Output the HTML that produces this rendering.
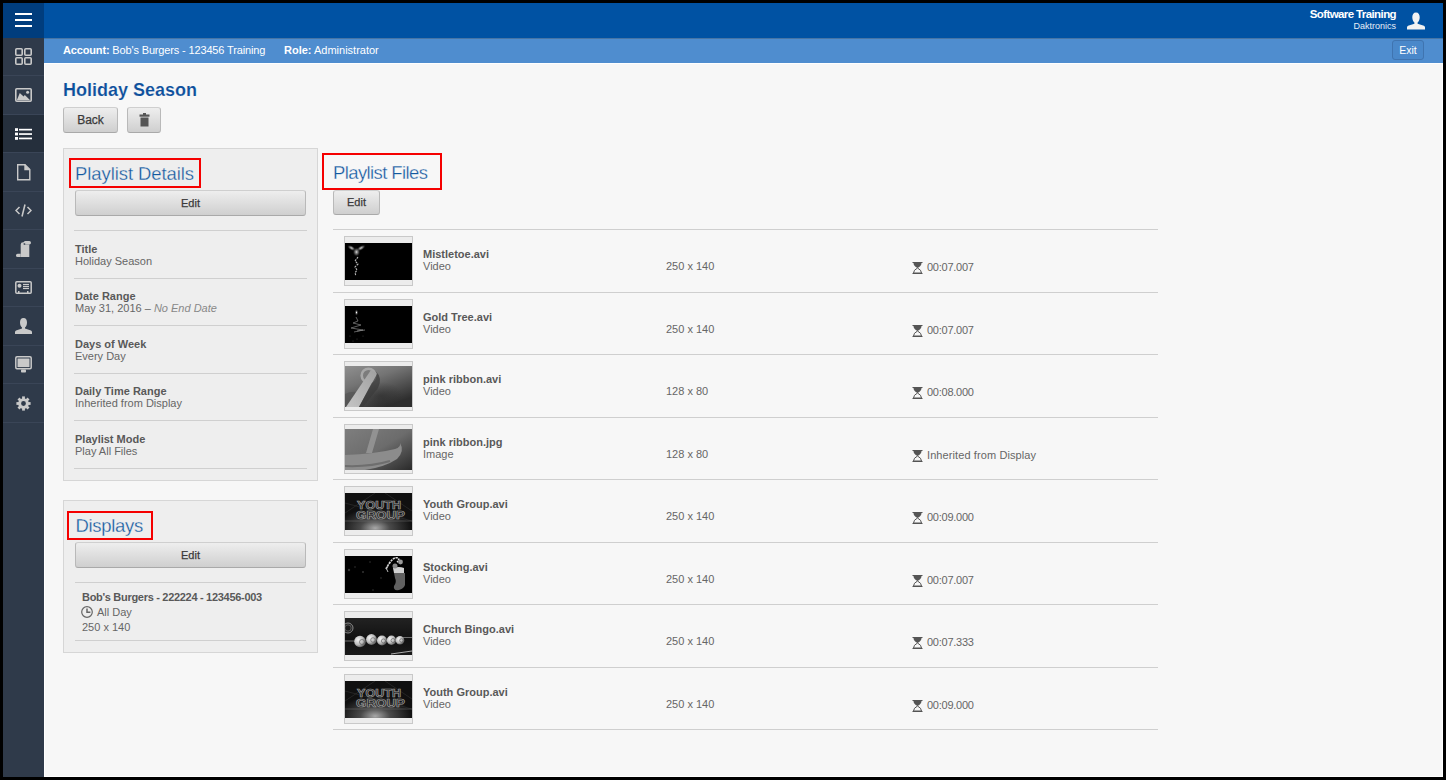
<!DOCTYPE html>
<html><head><meta charset="utf-8">
<style>
*{box-sizing:border-box;margin:0;padding:0}
html,body{width:1446px;height:780px;overflow:hidden;background:#000;font-family:"Liberation Sans",sans-serif}
body{position:relative}
.a{position:absolute;white-space:nowrap}
#frame{position:absolute;left:3px;top:3px;width:1440px;height:774px;background:#f7f7f7}
#header{left:44px;top:3px;width:1399px;height:35px;background:#0052a3}
#burger{left:3px;top:3px;width:41px;height:35px;background:#003d7d}
#burger i{position:absolute;left:12px;width:17px;height:2px;background:#fff}
#sub{left:44px;top:38px;width:1399px;height:25px;background:#4f8dcf;color:#fff;font-size:11px}
#sidebar{left:3px;top:38px;width:41px;height:739px;background:#2f3a4a}
.sep{position:absolute;left:3px;width:41px;height:1px;background:#3a4557}

.btn{border:1px solid #b9b9b9;border-top-color:#cfcfcf;border-bottom-color:#a9a9a9;border-radius:3px;background:linear-gradient(#eeeeee,#cfcfcf);color:#3a3a3a;text-align:center;-webkit-text-stroke:0.25px #3a3a3a}

.panel{border:1px solid #d6d6d6;background:#eeeeee}
.redbox{border:2px solid #f50000}
.h2{color:#12589f;font-size:18.5px;font-weight:normal;-webkit-text-stroke:0.3px #f7f7f7}
.hl{height:1px;background:#cfcfcf}
.lbl{color:#595959;font-size:11px;font-weight:bold}
.val{color:#666;font-size:11px}

.thumb{width:69px;height:50px;border:1px solid #c9c9c9;background:#ececec;overflow:hidden}
.thimg{position:absolute;left:0;width:67px;background:#000}
.thimg svg{display:block}
</style></head><body>
<div id="frame"></div>
<div class="a" id="sidebar"></div>
<div class="a" id="header"></div>
<div class="a" id="burger"><i style="top:10px"></i><i style="top:16px"></i><i style="top:22px"></i></div>
<div class="a" id="sub"></div>

<!-- sidebar nav -->
<div class="a" style="left:3px;top:114px;width:41px;height:38px;background:#252f3c"></div>
<div class="sep" style="top:75px"></div>
<div class="sep" style="top:114px"></div>
<div class="sep" style="top:152px"></div>
<div class="sep" style="top:191px"></div>
<div class="sep" style="top:229px"></div>
<div class="sep" style="top:268px"></div>
<div class="sep" style="top:306px"></div>
<div class="sep" style="top:345px"></div>
<div class="sep" style="top:383px"></div>
<div class="sep" style="top:422px"></div>
<svg class="a" style="left:15px;top:48px" width="17" height="17" viewBox="0 0 17 17" fill="none" stroke="#c9c9c9" stroke-width="1.6"><rect x="0.8" y="0.8" width="6.4" height="6.4" rx="1"/><rect x="9.8" y="0.8" width="6.4" height="6.4" rx="1"/><rect x="0.8" y="9.8" width="6.4" height="6.4" rx="1"/><rect x="9.8" y="9.8" width="6.4" height="6.4" rx="1"/></svg>
<svg class="a" style="left:15px;top:88px" width="17" height="14" viewBox="0 0 17 14"><rect x="0.8" y="0.8" width="15.4" height="12.4" rx="1" fill="none" stroke="#c9c9c9" stroke-width="1.6"/><path d="M1.8 12.3 L4.8 5 L8.6 8.6 L9.8 7 L15.2 12.3 Z" fill="#c9c9c9"/><circle cx="12.6" cy="4.3" r="1.5" fill="#c9c9c9"/></svg>
<svg class="a" style="left:15px;top:128px" width="17" height="12" viewBox="0 0 17 12" fill="#fff"><rect x="0" y="0.2" width="3" height="2.8"/><rect x="0" y="4.6" width="3" height="2.8"/><rect x="0" y="9" width="3" height="2.8"/><rect x="4" y="0.8" width="13" height="1.7"/><rect x="4" y="5.2" width="13" height="1.7"/><rect x="4" y="9.6" width="13" height="1.7"/></svg>
<svg class="a" style="left:17px;top:164px" width="14" height="17" viewBox="0 0 14 17" fill="none" stroke="#c9c9c9" stroke-width="1.4"><path d="M0.7 0.7 H8 L12.8 5.5 V15.8 H0.7 Z"/><path d="M8 0.7 V5.5 H12.8" fill="#c9c9c9"/></svg>
<svg class="a" style="left:15px;top:204px" width="17" height="13" viewBox="0 0 17 13" fill="none" stroke="#c9c9c9" stroke-width="1.5"><path d="M4.5 3 L1 6.5 L4.5 10"/><path d="M12.5 3 L16 6.5 L12.5 10"/><path d="M10 0.5 L7 12.5"/></svg>
<svg class="a" style="left:16px;top:241px" width="15" height="16" viewBox="0 0 15 16" fill="#c9c9c9"><path d="M4.7 16 V3.6 Q4.7 1.2 7.2 1.2 H8 V3.4 H13.3 V16 Z"/><rect x="7.6" y="0" width="7.4" height="3.4" rx="1.7"/><rect x="7.6" y="2.3" width="1.6" height="1.3" fill="#2f3a4a"/><path d="M1.6 16 A1.6 1.6 0 0 1 1.6 12.8 H4.7 V16 Z"/></svg>
<svg class="a" style="left:15px;top:281px" width="17" height="13" viewBox="0 0 17 13"><rect x="0.8" y="0.8" width="15.4" height="11.4" rx="1" fill="none" stroke="#c9c9c9" stroke-width="1.5"/><circle cx="4.5" cy="4.7" r="2" fill="#c9c9c9"/><rect x="8" y="2.9" width="6" height="1.2" fill="#c9c9c9"/><rect x="8" y="4.9" width="6" height="1.2" fill="#c9c9c9"/><rect x="8" y="6.9" width="6" height="1.2" fill="#c9c9c9"/><rect x="3" y="10" width="1.5" height="2" fill="#c9c9c9"/><rect x="12" y="10" width="1.5" height="2" fill="#c9c9c9"/></svg>
<svg class="a" style="left:15px;top:318px" width="17" height="16" viewBox="0 0 17 16" fill="#c9c9c9"><path d="M8.5 0 C11 0 12 2 12 4.5 C12 7 11 8.8 10 9.5 V10.5 L16 12.5 Q17 13 17 14 V16 H0 V14 Q0 13 1 12.5 L7 10.5 V9.5 C6 8.8 5 7 5 4.5 C5 2 6 0 8.5 0 Z"/></svg>
<svg class="a" style="left:15px;top:356px" width="17" height="17" viewBox="0 0 17 17"><rect x="0.8" y="0.8" width="15.4" height="12" rx="1.2" fill="none" stroke="#c9c9c9" stroke-width="1.5"/><rect x="2.5" y="2.5" width="12" height="8.6" fill="#c9c9c9"/><rect x="6" y="13.5" width="5" height="3" rx="0.8" fill="#c9c9c9"/></svg>
<svg class="a" style="left:16px;top:396px" width="15" height="15" viewBox="-7.5 -7.5 15 15" fill="#c9c9c9"><path fill-rule="evenodd" d="M5.3 0 A5.3 5.3 0 1 1 -5.3 0 A5.3 5.3 0 1 1 5.3 0 Z M2.4 0 A2.4 2.4 0 1 0 -2.4 0 A2.4 2.4 0 1 0 2.4 0 Z"/><rect x="-1.4" y="-7.1" width="2.8" height="2.8" transform="rotate(0)"/><rect x="-1.4" y="-7.1" width="2.8" height="2.8" transform="rotate(45)"/><rect x="-1.4" y="-7.1" width="2.8" height="2.8" transform="rotate(90)"/><rect x="-1.4" y="-7.1" width="2.8" height="2.8" transform="rotate(135)"/><rect x="-1.4" y="-7.1" width="2.8" height="2.8" transform="rotate(180)"/><rect x="-1.4" y="-7.1" width="2.8" height="2.8" transform="rotate(225)"/><rect x="-1.4" y="-7.1" width="2.8" height="2.8" transform="rotate(270)"/><rect x="-1.4" y="-7.1" width="2.8" height="2.8" transform="rotate(315)"/></svg>

<!-- header right -->
<div class="a" style="right:50px;top:8px;color:#fff;font-size:11.5px;font-weight:bold;letter-spacing:-0.6px;text-align:right">Software Training</div>
<div class="a" style="right:50px;top:21px;color:#e6eef7;font-size:9px;text-align:right">Daktronics</div>
<svg class="a" style="left:1407px;top:12px" width="18" height="18" viewBox="0 0 17 16" fill="#f2f2f2"><path d="M8.5 0 C11 0 12 2 12 4.5 C12 7 11 8.8 10 9.5 V10.5 L16 12.5 Q17 13 17 14 V16 H0 V14 Q0 13 1 12.5 L7 10.5 V9.5 C6 8.8 5 7 5 4.5 C5 2 6 0 8.5 0 Z"/></svg>
<!-- subheader -->
<div class="a" style="left:63px;top:44px;color:#fff;font-size:11px;letter-spacing:-0.15px"><b>Account:</b> Bob's Burgers - 123456 Training</div>
<div class="a" style="left:284px;top:44px;color:#fff;font-size:11px"><b>Role:</b> Administrator</div>
<div class="a" style="left:1392px;top:40px;width:32px;height:20px;border:1px solid #3f74b0;border-radius:3px;background:#4a88ca;color:#fff;font-size:10.5px;text-align:center;line-height:18px">Exit</div>
<!-- title -->
<div class="a" style="left:63px;top:80px;color:#0d4f9c;font-size:18px;font-weight:bold;-webkit-text-stroke:0.15px #f7f7f7">Holiday Season</div>
<div class="a btn" style="left:63px;top:107px;width:55px;height:26px;font-size:12px;line-height:24px">Back</div>
<div class="a btn" style="left:127px;top:107px;width:34px;height:26px"><svg style="position:absolute;left:11px;top:5px" width="11" height="14" viewBox="0 0 11 14" fill="#555"><rect x="0.5" y="1.5" width="10" height="2.2"/><rect x="4" y="0" width="3" height="2"/><rect x="1.5" y="4.5" width="8" height="9"/></svg></div>

<!-- left panels -->
<div class="a panel" style="left:63px;top:148px;width:255px;height:333px"></div>
<div class="a redbox" style="left:69px;top:158px;width:132px;height:30px"></div>
<div class="a h2" style="left:75px;top:163px;letter-spacing:-0.08px;-webkit-text-stroke-color:#eee">Playlist Details</div>
<div class="a btn" style="left:75px;top:190px;width:231px;height:26px;font-size:11px;line-height:24px">Edit</div>
<div class="a hl" style="left:74px;top:230px;width:233px"></div>
<div class="a lbl" style="left:75px;top:243px">Title</div>
<div class="a val" style="left:75px;top:255px">Holiday Season</div>
<div class="a hl" style="left:74px;top:278px;width:233px"></div>
<div class="a lbl" style="left:75px;top:290px">Date Range</div>
<div class="a val" style="left:75px;top:302px">May 31, 2016 &ndash; <i style="color:#888">No End Date</i></div>
<div class="a hl" style="left:74px;top:325px;width:233px"></div>
<div class="a lbl" style="left:75px;top:338px">Days of Week</div>
<div class="a val" style="left:75px;top:350px">Every Day</div>
<div class="a hl" style="left:74px;top:373px;width:233px"></div>
<div class="a lbl" style="left:75px;top:385px">Daily Time Range</div>
<div class="a val" style="left:75px;top:397px">Inherited from Display</div>
<div class="a hl" style="left:74px;top:420px;width:233px"></div>
<div class="a lbl" style="left:75px;top:433px">Playlist Mode</div>
<div class="a val" style="left:75px;top:445px">Play All Files</div>
<div class="a hl" style="left:74px;top:468px;width:233px"></div>

<div class="a panel" style="left:63px;top:500px;width:255px;height:153px"></div>
<div class="a redbox" style="left:67px;top:511px;width:86px;height:29px"></div>
<div class="a h2" style="left:75.5px;top:515px;letter-spacing:-0.3px;-webkit-text-stroke-color:#eee">Displays</div>
<div class="a btn" style="left:75px;top:542px;width:231px;height:26px;font-size:11px;line-height:24px">Edit</div>
<div class="a hl" style="left:75px;top:582px;width:231px"></div>
<div class="a lbl" style="left:82px;top:591px;letter-spacing:-0.3px">Bob's Burgers - 222224 - 123456-003</div>
<svg class="a" style="left:81px;top:606px" width="12" height="12" viewBox="0 0 12 12" fill="none" stroke="#666" stroke-width="1.2"><circle cx="6" cy="6" r="5.3"/><path d="M6 2.4 V6.2 H9.4" stroke-width="1.5"/></svg>
<div class="a val" style="left:97px;top:606px">All Day</div>
<div class="a val" style="left:82px;top:621px">250 x 140</div>
<div class="a hl" style="left:75px;top:640px;width:231px"></div>
<!-- playlist files -->
<div class="a redbox" style="left:322px;top:153px;width:120px;height:37px"></div>
<div class="a h2" style="left:333px;top:162px;letter-spacing:-0.6px">Playlist Files</div>
<div class="a btn" style="left:333px;top:190px;width:47px;height:25px;font-size:11px;line-height:23px">Edit</div>

<!-- file rows -->
<div class="a hl" style="left:333px;top:229px;width:825px"></div>
<div class="a thumb" style="left:344px;top:236px"><div class="thimg" style="top:6px;height:37px"><svg width="67" height="37" viewBox="0 0 67 37"><defs><radialGradient id="gm"><stop offset="0" stop-color="#d8d8d8"/><stop offset="0.5" stop-color="#707070" stop-opacity="0.7"/><stop offset="1" stop-color="#000" stop-opacity="0"/></radialGradient></defs><rect width="67" height="37" fill="#000"/><ellipse cx="6.5" cy="5" rx="5" ry="2.5" transform="rotate(30 6.5 5)" fill="url(#gm)"/><ellipse cx="16" cy="5" rx="5.5" ry="2.5" transform="rotate(-30 16 5)" fill="url(#gm)"/><ellipse cx="11.5" cy="9" rx="4" ry="5" fill="url(#gm)"/><path d="M13 14 L10 18 L13 21 L10 24 L12 27 L10 30 L11 33" stroke="#bbb" stroke-width="1.1" fill="none" stroke-dasharray="2 1"/></svg></div></div>
<div class="a lbl" style="left:423px;top:248px">Mistletoe.avi</div>
<div class="a val" style="left:423px;top:260px">Video</div>
<div class="a val" style="left:666px;top:260px">250 x 140</div>
<svg class="a" style="left:912px;top:262px" width="11" height="12" viewBox="0 0 11 12"><path d="M0.5 0.5 H10.5 M0.5 11.5 H10.5" stroke="#555" stroke-width="1.2"/><path d="M1.5 1 H9.5 Q9.5 4 5.5 6 Q1.5 4 1.5 1 Z" fill="#555"/><path d="M1.5 11 Q1.5 8 5.5 6 Q9.5 8 9.5 11 Z" fill="none" stroke="#555" stroke-width="1"/></svg>
<div class="a val" style="left:927px;top:261px;letter-spacing:-0.25px;">00:07.007</div>
<div class="a hl" style="left:333px;top:292px;width:825px"></div>
<div class="a thumb" style="left:344px;top:299px"><div class="thimg" style="top:6px;height:37px"><svg width="67" height="37" viewBox="0 0 67 37"><defs><radialGradient id="gt"><stop offset="0" stop-color="#fff"/><stop offset="1" stop-color="#000" stop-opacity="0"/></radialGradient></defs><rect width="67" height="37" fill="#000"/><ellipse cx="11.5" cy="6.5" rx="2" ry="3.5" fill="url(#gt)"/><path d="M11 11 L13 15 L8 17 L16 19 L6 22 L18 24 L9 26" stroke="#777" stroke-width="0.8" fill="none"/><path d="M12 25 L20 24" stroke="#888" stroke-width="0.8"/><g fill="#444"><circle cx="5" cy="30" r="0.5"/><circle cx="12" cy="33" r="0.5"/><circle cx="18" cy="30" r="0.5"/><circle cx="8" cy="35" r="0.5"/></g></svg></div></div>
<div class="a lbl" style="left:423px;top:311px">Gold Tree.avi</div>
<div class="a val" style="left:423px;top:323px">Video</div>
<div class="a val" style="left:666px;top:323px">250 x 140</div>
<svg class="a" style="left:912px;top:325px" width="11" height="12" viewBox="0 0 11 12"><path d="M0.5 0.5 H10.5 M0.5 11.5 H10.5" stroke="#555" stroke-width="1.2"/><path d="M1.5 1 H9.5 Q9.5 4 5.5 6 Q1.5 4 1.5 1 Z" fill="#555"/><path d="M1.5 11 Q1.5 8 5.5 6 Q9.5 8 9.5 11 Z" fill="none" stroke="#555" stroke-width="1"/></svg>
<div class="a val" style="left:927px;top:324px;letter-spacing:-0.25px;">00:07.007</div>
<div class="a hl" style="left:333px;top:354px;width:825px"></div>
<div class="a thumb" style="left:344px;top:361px"><div class="thimg" style="top:4px;height:41px"><svg width="67" height="41" viewBox="0 0 67 41"><defs><linearGradient id="gr1" x1="0" y1="0" x2="0.6" y2="1"><stop offset="0" stop-color="#909090"/><stop offset="0.4" stop-color="#747474"/><stop offset="1" stop-color="#2e2e2e"/></linearGradient><linearGradient id="gb1" x1="0" y1="1" x2="1" y2="0"><stop offset="0" stop-color="#c4c4c4"/><stop offset="1" stop-color="#a0a0a0"/></linearGradient><radialGradient id="gs1" cx="0.5" cy="0.5" r="0.5"><stop offset="0" stop-color="#222" stop-opacity="0.45"/><stop offset="1" stop-color="#222" stop-opacity="0"/></radialGradient></defs><rect width="67" height="41" fill="url(#gr1)"/><path d="M0 28 Q8 24 16 27 L14 41 L0 41 Z" fill="#555" opacity="0.7"/><ellipse cx="36" cy="30" rx="22" ry="14" fill="url(#gs1)"/><circle cx="23.5" cy="9.5" r="6.8" fill="#7c7c7c" stroke="#a8a8a8" stroke-width="2.6"/><path d="M1 41 L26 4 L32 7 L14 41 Z" fill="url(#gb1)"/><path d="M30.5 5 Q38 12 33 22 L18 41 L14 41 L32 8 Z" fill="#3a3a3a" opacity="0.7"/></svg></div></div>
<div class="a lbl" style="left:423px;top:373px">pink ribbon.avi</div>
<div class="a val" style="left:423px;top:385px">Video</div>
<div class="a val" style="left:666px;top:385px">128 x 80</div>
<svg class="a" style="left:912px;top:387px" width="11" height="12" viewBox="0 0 11 12"><path d="M0.5 0.5 H10.5 M0.5 11.5 H10.5" stroke="#555" stroke-width="1.2"/><path d="M1.5 1 H9.5 Q9.5 4 5.5 6 Q1.5 4 1.5 1 Z" fill="#555"/><path d="M1.5 11 Q1.5 8 5.5 6 Q9.5 8 9.5 11 Z" fill="none" stroke="#555" stroke-width="1"/></svg>
<div class="a val" style="left:927px;top:386px;letter-spacing:-0.25px;">00:08.000</div>
<div class="a hl" style="left:333px;top:417px;width:825px"></div>
<div class="a thumb" style="left:344px;top:424px"><div class="thimg" style="top:4px;height:41px"><svg width="67" height="41" viewBox="0 0 67 41"><defs><linearGradient id="gr2" x1="0" y1="0" x2="1" y2="1"><stop offset="0" stop-color="#7e7e7e"/><stop offset="0.5" stop-color="#6c6c6c"/><stop offset="1" stop-color="#2a2a2a"/></linearGradient></defs><rect width="67" height="41" fill="url(#gr2)"/><path d="M28 0 L34 0 L27 24 L21 24 Z" fill="#9a9a9a" opacity="0.8"/><path d="M0 26 Q30 25 50 20 Q56 18 55 14 Q60 22 52 30 Q40 38 20 41 L0 41 Z" fill="#8c8c8c"/><path d="M0 37 Q25 38 45 32" stroke="#6e6e6e" stroke-width="2" fill="none"/></svg></div></div>
<div class="a lbl" style="left:423px;top:436px">pink ribbon.jpg</div>
<div class="a val" style="left:423px;top:448px">Image</div>
<div class="a val" style="left:666px;top:448px">128 x 80</div>
<svg class="a" style="left:912px;top:450px" width="11" height="12" viewBox="0 0 11 12"><path d="M0.5 0.5 H10.5 M0.5 11.5 H10.5" stroke="#555" stroke-width="1.2"/><path d="M1.5 1 H9.5 Q9.5 4 5.5 6 Q1.5 4 1.5 1 Z" fill="#555"/><path d="M1.5 11 Q1.5 8 5.5 6 Q9.5 8 9.5 11 Z" fill="none" stroke="#555" stroke-width="1"/></svg>
<div class="a val" style="left:927px;top:449px;letter-spacing:0.1px;">Inherited from Display</div>
<div class="a hl" style="left:333px;top:479px;width:825px"></div>
<div class="a thumb" style="left:344px;top:486px"><div class="thimg" style="top:6px;height:37px"><svg width="67" height="37" viewBox="0 0 67 37"><defs><radialGradient id="gy" cx="0.45" cy="0.95" r="0.55"><stop offset="0" stop-color="#a8a8a8"/><stop offset="0.4" stop-color="#4a4a4a"/><stop offset="1" stop-color="#101010"/></radialGradient></defs><rect width="67" height="37" fill="url(#gy)"/><path d="M0 10 L67 28 M0 20 L30 0 M40 0 L67 18" stroke="#3a3a3a" stroke-width="0.5"/><g font-family="Liberation Sans" font-weight="bold" fill="#202020" stroke="#a0a0a0" stroke-width="0.65"><text x="12" y="15.5" font-size="11" textLength="44" lengthAdjust="spacingAndGlyphs">YOUTH</text><text x="11" y="26" font-size="11.5" textLength="49" lengthAdjust="spacingAndGlyphs">GROUP</text></g><path d="M0 28 H67" stroke="#777" stroke-width="0.5"/></svg></div></div>
<div class="a lbl" style="left:423px;top:498px">Youth Group.avi</div>
<div class="a val" style="left:423px;top:510px">Video</div>
<div class="a val" style="left:666px;top:510px">250 x 140</div>
<svg class="a" style="left:912px;top:512px" width="11" height="12" viewBox="0 0 11 12"><path d="M0.5 0.5 H10.5 M0.5 11.5 H10.5" stroke="#555" stroke-width="1.2"/><path d="M1.5 1 H9.5 Q9.5 4 5.5 6 Q1.5 4 1.5 1 Z" fill="#555"/><path d="M1.5 11 Q1.5 8 5.5 6 Q9.5 8 9.5 11 Z" fill="none" stroke="#555" stroke-width="1"/></svg>
<div class="a val" style="left:927px;top:511px;letter-spacing:-0.25px;">00:09.000</div>
<div class="a hl" style="left:333px;top:542px;width:825px"></div>
<div class="a thumb" style="left:344px;top:549px"><div class="thimg" style="top:6px;height:37px"><svg width="67" height="37" viewBox="0 0 67 37"><rect width="67" height="37" fill="#000"/><g fill="#333"><circle cx="4" cy="14" r="1.2"/><circle cx="18" cy="16" r="1"/><circle cx="10" cy="11" r="0.8"/><circle cx="36" cy="22" r="0.8"/><circle cx="28" cy="34" r="0.8"/><circle cx="25" cy="6" r="0.8"/></g><path d="M49 17 L60 17 L60 26 Q61 32 54 34 Q48 35 49 30 Q52 26 50 22 Z" fill="#606060"/><path d="M48 12 Q54 10 59 12 L59 17 L49 17 Z" fill="#d0d0d0"/><path d="M41 13 Q44 7 47 4 Q50 1 53 2 Q55 4 52 6" stroke="#d8d8d8" stroke-width="1.7" fill="none" stroke-dasharray="2.2 0.8"/><circle cx="55.5" cy="6" r="2.4" fill="#999"/><circle cx="50" cy="10" r="2.5" fill="#888"/><path d="M43 9 Q40 13 43 16" stroke="#bbb" stroke-width="1" fill="none"/></svg></div></div>
<div class="a lbl" style="left:423px;top:561px">Stocking.avi</div>
<div class="a val" style="left:423px;top:573px">Video</div>
<div class="a val" style="left:666px;top:573px">250 x 140</div>
<svg class="a" style="left:912px;top:575px" width="11" height="12" viewBox="0 0 11 12"><path d="M0.5 0.5 H10.5 M0.5 11.5 H10.5" stroke="#555" stroke-width="1.2"/><path d="M1.5 1 H9.5 Q9.5 4 5.5 6 Q1.5 4 1.5 1 Z" fill="#555"/><path d="M1.5 11 Q1.5 8 5.5 6 Q9.5 8 9.5 11 Z" fill="none" stroke="#555" stroke-width="1"/></svg>
<div class="a val" style="left:927px;top:574px;letter-spacing:-0.25px;">00:07.007</div>
<div class="a hl" style="left:333px;top:604px;width:825px"></div>
<div class="a thumb" style="left:344px;top:611px"><div class="thimg" style="top:6px;height:37px"><svg width="67" height="37" viewBox="0 0 67 37"><defs><radialGradient id="gball" cx="0.35" cy="0.35" r="0.7"><stop offset="0" stop-color="#f4f4f4"/><stop offset="0.6" stop-color="#bbb"/><stop offset="1" stop-color="#555"/></radialGradient><linearGradient id="gbg" x1="0" y1="0" x2="0" y2="1"><stop offset="0" stop-color="#222"/><stop offset="0.6" stop-color="#111"/><stop offset="1" stop-color="#1a1a1a"/></linearGradient></defs><rect width="67" height="37" fill="url(#gbg)"/><circle cx="3" cy="10" r="5" fill="none" stroke="#999" stroke-width="0.9"/><circle cx="3" cy="10" r="3.2" fill="none" stroke="#777" stroke-width="0.7"/><path d="M0 23 H14 M58 19.5 H67" stroke="#999" stroke-width="0.7"/><path d="M46 36 L67 33" stroke="#aaa" stroke-width="1"/><circle cx="15" cy="23.5" r="5.8" fill="url(#gball)"/><circle cx="26.5" cy="21.5" r="5.4" fill="url(#gball)"/><circle cx="37" cy="22.5" r="5" fill="url(#gball)"/><circle cx="46.5" cy="22.3" r="4.7" fill="url(#gball)"/><circle cx="55" cy="22.3" r="4.3" fill="url(#gball)"/><g fill="none" stroke="#555" stroke-width="0.6"><circle cx="17" cy="24" r="2.5"/><circle cx="28" cy="22" r="2.3"/><circle cx="38.5" cy="23" r="2.1"/><circle cx="48" cy="22.5" r="2"/><circle cx="56.5" cy="22.5" r="1.8"/></g></svg></div></div>
<div class="a lbl" style="left:423px;top:623px">Church Bingo.avi</div>
<div class="a val" style="left:423px;top:635px">Video</div>
<div class="a val" style="left:666px;top:635px">250 x 140</div>
<svg class="a" style="left:912px;top:637px" width="11" height="12" viewBox="0 0 11 12"><path d="M0.5 0.5 H10.5 M0.5 11.5 H10.5" stroke="#555" stroke-width="1.2"/><path d="M1.5 1 H9.5 Q9.5 4 5.5 6 Q1.5 4 1.5 1 Z" fill="#555"/><path d="M1.5 11 Q1.5 8 5.5 6 Q9.5 8 9.5 11 Z" fill="none" stroke="#555" stroke-width="1"/></svg>
<div class="a val" style="left:927px;top:636px;letter-spacing:-0.25px;">00:07.333</div>
<div class="a hl" style="left:333px;top:667px;width:825px"></div>
<div class="a thumb" style="left:344px;top:674px"><div class="thimg" style="top:6px;height:37px"><svg width="67" height="37" viewBox="0 0 67 37"><defs><radialGradient id="gy2" cx="0.45" cy="0.95" r="0.55"><stop offset="0" stop-color="#a8a8a8"/><stop offset="0.4" stop-color="#4a4a4a"/><stop offset="1" stop-color="#101010"/></radialGradient></defs><rect width="67" height="37" fill="url(#gy2)"/><path d="M0 10 L67 28 M0 20 L30 0 M40 0 L67 18" stroke="#3a3a3a" stroke-width="0.5"/><g font-family="Liberation Sans" font-weight="bold" fill="#202020" stroke="#a0a0a0" stroke-width="0.65"><text x="12" y="15.5" font-size="11" textLength="44" lengthAdjust="spacingAndGlyphs">YOUTH</text><text x="11" y="26" font-size="11.5" textLength="49" lengthAdjust="spacingAndGlyphs">GROUP</text></g><path d="M0 28 H67" stroke="#777" stroke-width="0.5"/></svg></div></div>
<div class="a lbl" style="left:423px;top:686px">Youth Group.avi</div>
<div class="a val" style="left:423px;top:698px">Video</div>
<div class="a val" style="left:666px;top:698px">250 x 140</div>
<svg class="a" style="left:912px;top:700px" width="11" height="12" viewBox="0 0 11 12"><path d="M0.5 0.5 H10.5 M0.5 11.5 H10.5" stroke="#555" stroke-width="1.2"/><path d="M1.5 1 H9.5 Q9.5 4 5.5 6 Q1.5 4 1.5 1 Z" fill="#555"/><path d="M1.5 11 Q1.5 8 5.5 6 Q9.5 8 9.5 11 Z" fill="none" stroke="#555" stroke-width="1"/></svg>
<div class="a val" style="left:927px;top:699px;letter-spacing:-0.25px;">00:09.000</div>
<div class="a hl" style="left:333px;top:729px;width:825px"></div>
<!-- content edges -->
<div class="a" style="left:44px;top:38px;width:1399px;height:1px;background:#4675a6"></div>
<div class="a" style="left:44px;top:63px;width:1399px;height:1px;background:#fff"></div>
<div class="a" style="left:44px;top:63px;width:1px;height:714px;background:#fff"></div>
<div class="a" style="left:44px;top:776px;width:1399px;height:1px;background:#fff"></div>
<div class="a" style="left:1442px;top:63px;width:1px;height:714px;background:#fff"></div>
</body></html>
